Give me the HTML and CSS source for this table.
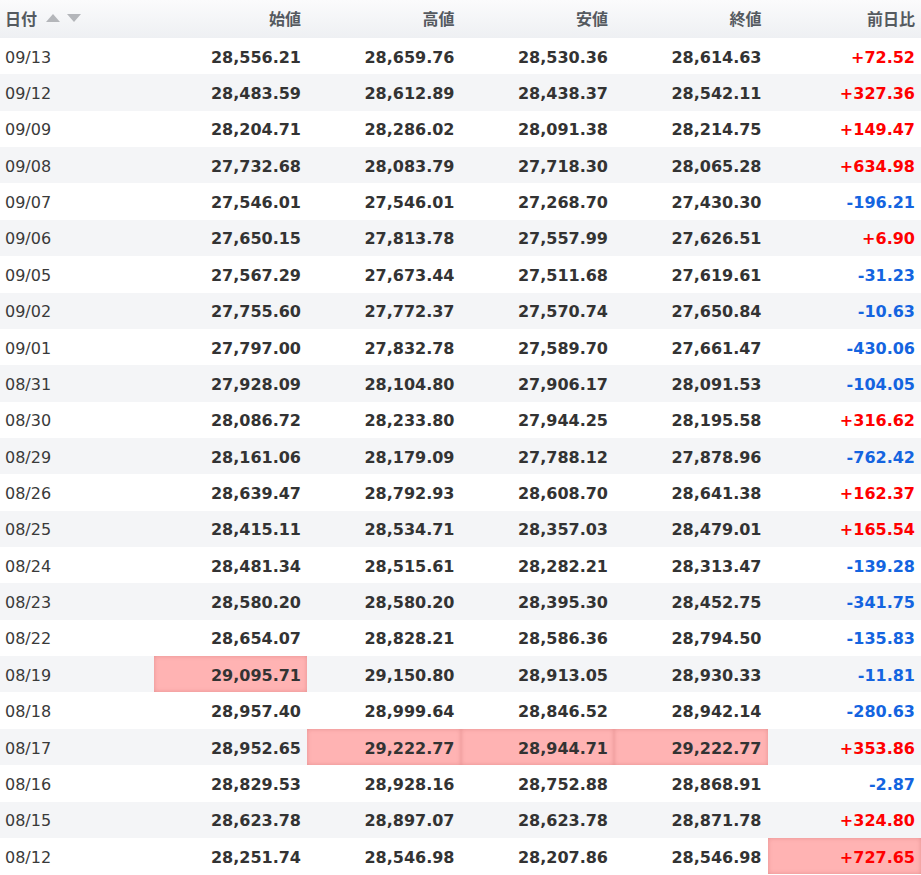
FILE: index.html
```html
<!DOCTYPE html>
<html lang="ja">
<head>
<meta charset="utf-8">
<link rel="stylesheet" href="styles.css">
</head>
<body>
<table class="prices">
<thead>
<tr>
<th class="date-h">日付<span class="sort"><span class="up"></span><span class="down"></span></span></th>
<th>始値</th><th>高値</th><th>安値</th><th>終値</th><th>前日比</th>
</tr>
</thead>
<tbody>
<tr><td class="d">09/13</td><td>28,556.21</td><td>28,659.76</td><td>28,530.36</td><td>28,614.63</td><td class="up">+72.52</td></tr>
<tr><td class="d">09/12</td><td>28,483.59</td><td>28,612.89</td><td>28,438.37</td><td>28,542.11</td><td class="up">+327.36</td></tr>
<tr><td class="d">09/09</td><td>28,204.71</td><td>28,286.02</td><td>28,091.38</td><td>28,214.75</td><td class="up">+149.47</td></tr>
<tr><td class="d">09/08</td><td>27,732.68</td><td>28,083.79</td><td>27,718.30</td><td>28,065.28</td><td class="up">+634.98</td></tr>
<tr><td class="d">09/07</td><td>27,546.01</td><td>27,546.01</td><td>27,268.70</td><td>27,430.30</td><td class="dn">-196.21</td></tr>
<tr><td class="d">09/06</td><td>27,650.15</td><td>27,813.78</td><td>27,557.99</td><td>27,626.51</td><td class="up">+6.90</td></tr>
<tr><td class="d">09/05</td><td>27,567.29</td><td>27,673.44</td><td>27,511.68</td><td>27,619.61</td><td class="dn">-31.23</td></tr>
<tr><td class="d">09/02</td><td>27,755.60</td><td>27,772.37</td><td>27,570.74</td><td>27,650.84</td><td class="dn">-10.63</td></tr>
<tr><td class="d">09/01</td><td>27,797.00</td><td>27,832.78</td><td>27,589.70</td><td>27,661.47</td><td class="dn">-430.06</td></tr>
<tr><td class="d">08/31</td><td>27,928.09</td><td>28,104.80</td><td>27,906.17</td><td>28,091.53</td><td class="dn">-104.05</td></tr>
<tr><td class="d">08/30</td><td>28,086.72</td><td>28,233.80</td><td>27,944.25</td><td>28,195.58</td><td class="up">+316.62</td></tr>
<tr><td class="d">08/29</td><td>28,161.06</td><td>28,179.09</td><td>27,788.12</td><td>27,878.96</td><td class="dn">-762.42</td></tr>
<tr><td class="d">08/26</td><td>28,639.47</td><td>28,792.93</td><td>28,608.70</td><td>28,641.38</td><td class="up">+162.37</td></tr>
<tr><td class="d">08/25</td><td>28,415.11</td><td>28,534.71</td><td>28,357.03</td><td>28,479.01</td><td class="up">+165.54</td></tr>
<tr><td class="d">08/24</td><td>28,481.34</td><td>28,515.61</td><td>28,282.21</td><td>28,313.47</td><td class="dn">-139.28</td></tr>
<tr><td class="d">08/23</td><td>28,580.20</td><td>28,580.20</td><td>28,395.30</td><td>28,452.75</td><td class="dn">-341.75</td></tr>
<tr><td class="d">08/22</td><td>28,654.07</td><td>28,828.21</td><td>28,586.36</td><td>28,794.50</td><td class="dn">-135.83</td></tr>
<tr><td class="d">08/19</td><td class="hl">29,095.71</td><td>29,150.80</td><td>28,913.05</td><td>28,930.33</td><td class="dn">-11.81</td></tr>
<tr><td class="d">08/18</td><td>28,957.40</td><td>28,999.64</td><td>28,846.52</td><td>28,942.14</td><td class="dn">-280.63</td></tr>
<tr><td class="d">08/17</td><td>28,952.65</td><td class="hl">29,222.77</td><td class="hl">28,944.71</td><td class="hl">29,222.77</td><td class="up">+353.86</td></tr>
<tr><td class="d">08/16</td><td>28,829.53</td><td>28,928.16</td><td>28,752.88</td><td>28,868.91</td><td class="dn">-2.87</td></tr>
<tr><td class="d">08/15</td><td>28,623.78</td><td>28,897.07</td><td>28,623.78</td><td>28,871.78</td><td class="up">+324.80</td></tr>
<tr><td class="d">08/12</td><td>28,251.74</td><td>28,546.98</td><td>28,207.86</td><td>28,546.98</td><td class="up hl">+727.65</td></tr>
</tbody>
</table>
</body>
</html>
```
FILE: styles.css
```css
html, body {
  margin: 0;
  padding: 0;
  background: #ffffff;
}

.prices {
  width: 921px;
  border-collapse: collapse;
  table-layout: fixed;
  font-family: "DejaVu Sans", Verdana, "Noto Sans CJK JP", sans-serif;
  font-size: 16px;
  color: #333333;
}

.prices th {
  height: 38px;
  padding: 0 6px 3px 5px;
  box-sizing: border-box;
  text-align: right;
  font-weight: bold;
  font-size: 16px;
  color: #555a60;
  background: linear-gradient(#fbfbfc, #eef0f3);
  font-family: "Noto Sans CJK JP", sans-serif;
  vertical-align: middle;
}

.prices th.date-h {
  text-align: left;
}

.sort {
  display: inline-flex;
  gap: 7px;
  margin-left: 9px;
  vertical-align: 3px;
}

.sort .up {
  width: 0;
  height: 0;
  border-left: 7px solid transparent;
  border-right: 7px solid transparent;
  border-bottom: 8px solid #b4b6ba;
}

.sort .down {
  width: 0;
  height: 0;
  border-left: 7px solid transparent;
  border-right: 7px solid transparent;
  border-top: 8px solid #b4b6ba;
}

.prices td {
  height: 36.36px;
  padding: 2px 6px 0 5px;
  text-align: right;
  font-weight: bold;
  vertical-align: middle;
  box-sizing: border-box;
  white-space: nowrap;
}

.prices tbody tr:nth-child(even) td {
  background: #f4f5f7;
}

.prices td.d {
  text-align: left;
  font-weight: normal;
  color: #3a3a3a;
}

.prices td.up {
  color: #ff0000;
}

.prices td.dn {
  color: #1464e0;
}

.prices tbody tr td.hl {
  background: #ffb3b3;
  box-shadow: inset 0 0 4px rgba(180, 80, 80, 0.35);
}
```
